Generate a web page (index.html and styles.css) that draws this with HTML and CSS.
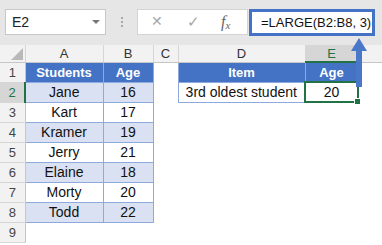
FILE: index.html
```html
<html>
<head>
  <title>LARGE</title>
  <link rel="stylesheet" href="styles.css">
</head>
<body>
  <div class="ribbon">
    <div class="name-box"><span>E2</span><span class="caret"></span></div>
    <div class="grip"><i></i><i></i><i></i></div>
    <div class="fn-box">
      <span class="cancel">&#10005;</span>
      <span class="enter">&#10003;</span>
      <span class="fx">f<sub>x</sub></span>
    </div>
    <div class="formula">=LARGE(B2:B8, 3)</div>
  </div>

  <table class="sheet">
    <colgroup>
      <col style="width: 25px">
      <col style="width: 78px">
      <col style="width: 50px">
      <col style="width: 25px">
      <col style="width: 127px">
      <col style="width: 53px">
      <col>
    </colgroup>
    <tr class="col-heads">
      <th class="corner"><span class="tri"></span></th>
      <th>A</th><th>B</th><th>C</th><th>D</th><th class="active">E</th><th class="last"></th>
    </tr>
    <tr>
      <th class="row-head">1</th>
      <td class="hdr">Students</td><td class="hdr">Age</td>
      <td></td>
      <td class="hdr">Item</td><td class="hdr">Age</td><td></td>
    </tr>
    <tr>
      <th class="row-head active">2</th>
      <td class="band">Jane</td><td class="band">16</td>
      <td></td>
      <td class="plain">3rd oldest student</td>
      <td class="plain selected">20<span class="handle"></span></td><td></td>
    </tr>
    <tr>
      <th class="row-head">3</th>
      <td class="plain">Kart</td><td class="plain">17</td><td></td><td></td><td></td><td></td>
    </tr>
    <tr>
      <th class="row-head">4</th>
      <td class="band">Kramer</td><td class="band">19</td><td></td><td></td><td></td><td></td>
    </tr>
    <tr>
      <th class="row-head">5</th>
      <td class="plain">Jerry</td><td class="plain">21</td><td></td><td></td><td></td><td></td>
    </tr>
    <tr>
      <th class="row-head">6</th>
      <td class="band">Elaine</td><td class="band">18</td><td></td><td></td><td></td><td></td>
    </tr>
    <tr>
      <th class="row-head">7</th>
      <td class="plain">Morty</td><td class="plain">20</td><td></td><td></td><td></td><td></td>
    </tr>
    <tr>
      <th class="row-head">8</th>
      <td class="band">Todd</td><td class="band">22</td><td></td><td></td><td></td><td></td>
    </tr>
    <tr>
      <th class="row-head">9</th>
      <td></td><td></td><td></td><td></td><td></td><td></td>
    </tr>
  </table>

  <!-- arrow from the cell up to the formula bar -->
  <svg class="arrow" width="18" height="50" viewBox="0 0 18 50">
    <path d="M9 0 L17 13 L12 13 L12 49 L6 49 L6 13 L1 13 Z" fill="#4a78c8"/>
  </svg>
</body>
</html>
```

FILE: styles.css
```css
html, body {
  margin: 0;
  width: 382px;
  height: 245px;
  overflow: hidden;
  background: #fff;
  font-family: "Liberation Sans", Arial, sans-serif;
  position: relative;
}

.ribbon {
  height: 45px;
  box-sizing: border-box;
  padding: 9px 0 0 5px;
  background: #e6e6e6;
  display: flex;
  align-items: flex-start;
}

.name-box {
  width: 101px;
  height: 26px;
  box-sizing: border-box;
  background: #fff;
  border: 1px solid #c8c8c8;
  display: flex;
  align-items: center;
  justify-content: space-between;
  padding: 0 5px 0 6px;
  font-size: 14px;
  color: #222;
}

.caret {
  width: 0;
  height: 0;
  border-left: 4px solid transparent;
  border-right: 4px solid transparent;
  border-top: 4px solid #777;
}

.grip {
  width: 31px;
  height: 26px;
  display: flex;
  flex-direction: column;
  align-items: center;
  justify-content: center;
  gap: 2px;
}

.grip i {
  width: 2px;
  height: 2px;
  background: #a8a8a8;
}

.fn-box {
  width: 111px;
  height: 26px;
  box-sizing: border-box;
  background: #fff;
  border: 1px solid #d4d4d4;
  position: relative;
  color: #a6a6a6;
}

.fn-box span {
  position: absolute;
  top: 3px;
}

.cancel {
  left: 13px;
  font-size: 14px;
}

.enter {
  left: 49px;
  font-size: 15px;
}

.fx {
  left: 83px;
  font-family: "Liberation Serif", serif;
  font-style: italic;
  font-size: 16px;
  color: #666;
}

.fx sub {
  font-size: 11px;
  vertical-align: -2px;
}

.formula {
  margin-left: 1px;
  width: 126px;
  height: 27px;
  box-sizing: border-box;
  border: 3px solid #4472c4;
  background: #fff;
  font-size: 13px;
  color: #111;
  padding-left: 9px;
  line-height: 21px;
  white-space: nowrap;
  overflow: hidden;
}

.sheet {
  width: 382px;
  table-layout: fixed;
  border-collapse: collapse;
  font-size: 14px;
}

.sheet th, .sheet td {
  padding: 0;
  height: 20px;
  text-align: center;
  white-space: nowrap;
  overflow: visible;
}

.col-heads th {
  height: 17px;
  background: #f2f2f2;
  color: #333;
  font-weight: normal;
  font-size: 13px;
  border-right: 1px solid #d6d6d6;
  border-bottom: 1px solid #c6c6c6;
}

.col-heads th.active {
  background: #d6d6d6;
  color: #217346;
  border-bottom: 2px solid #217346;
}

.col-heads th.last {
  border-right: none;
}

.corner {
  position: relative;
}

.tri {
  position: absolute;
  right: 2px;
  bottom: 2px;
  width: 0;
  height: 0;
  border-left: 12px solid transparent;
  border-bottom: 12px solid #b9b9b9;
}

.row-head {
  background: #f2f2f2;
  color: #444;
  font-weight: normal;
  font-size: 13px;
  border-right: 1px solid #c6c6c6;
  border-bottom: 1px solid #d6d6d6;
}

.row-head.active {
  background: #d6d6d6;
  color: #217346;
  border-right: 2px solid #217346;
}

.hdr {
  background: #4472c4;
  color: #fff;
  font-weight: bold;
  font-size: 13px;
  border: 1px solid #8ea9db;
}

.band {
  background: #d9e1f2;
  color: #111;
  border: 1px solid #8ea9db;
}

.plain {
  background: #fff;
  color: #111;
  border: 1px solid #8ea9db;
}

.selected {
  position: relative;
  border: 2px solid #217346;
}

.handle {
  position: absolute;
  right: -4px;
  bottom: -4px;
  width: 5px;
  height: 5px;
  background: #217346;
  border: 1px solid #fff;
}

.arrow {
  position: absolute;
  left: 350px;
  top: 38px;
}
```
